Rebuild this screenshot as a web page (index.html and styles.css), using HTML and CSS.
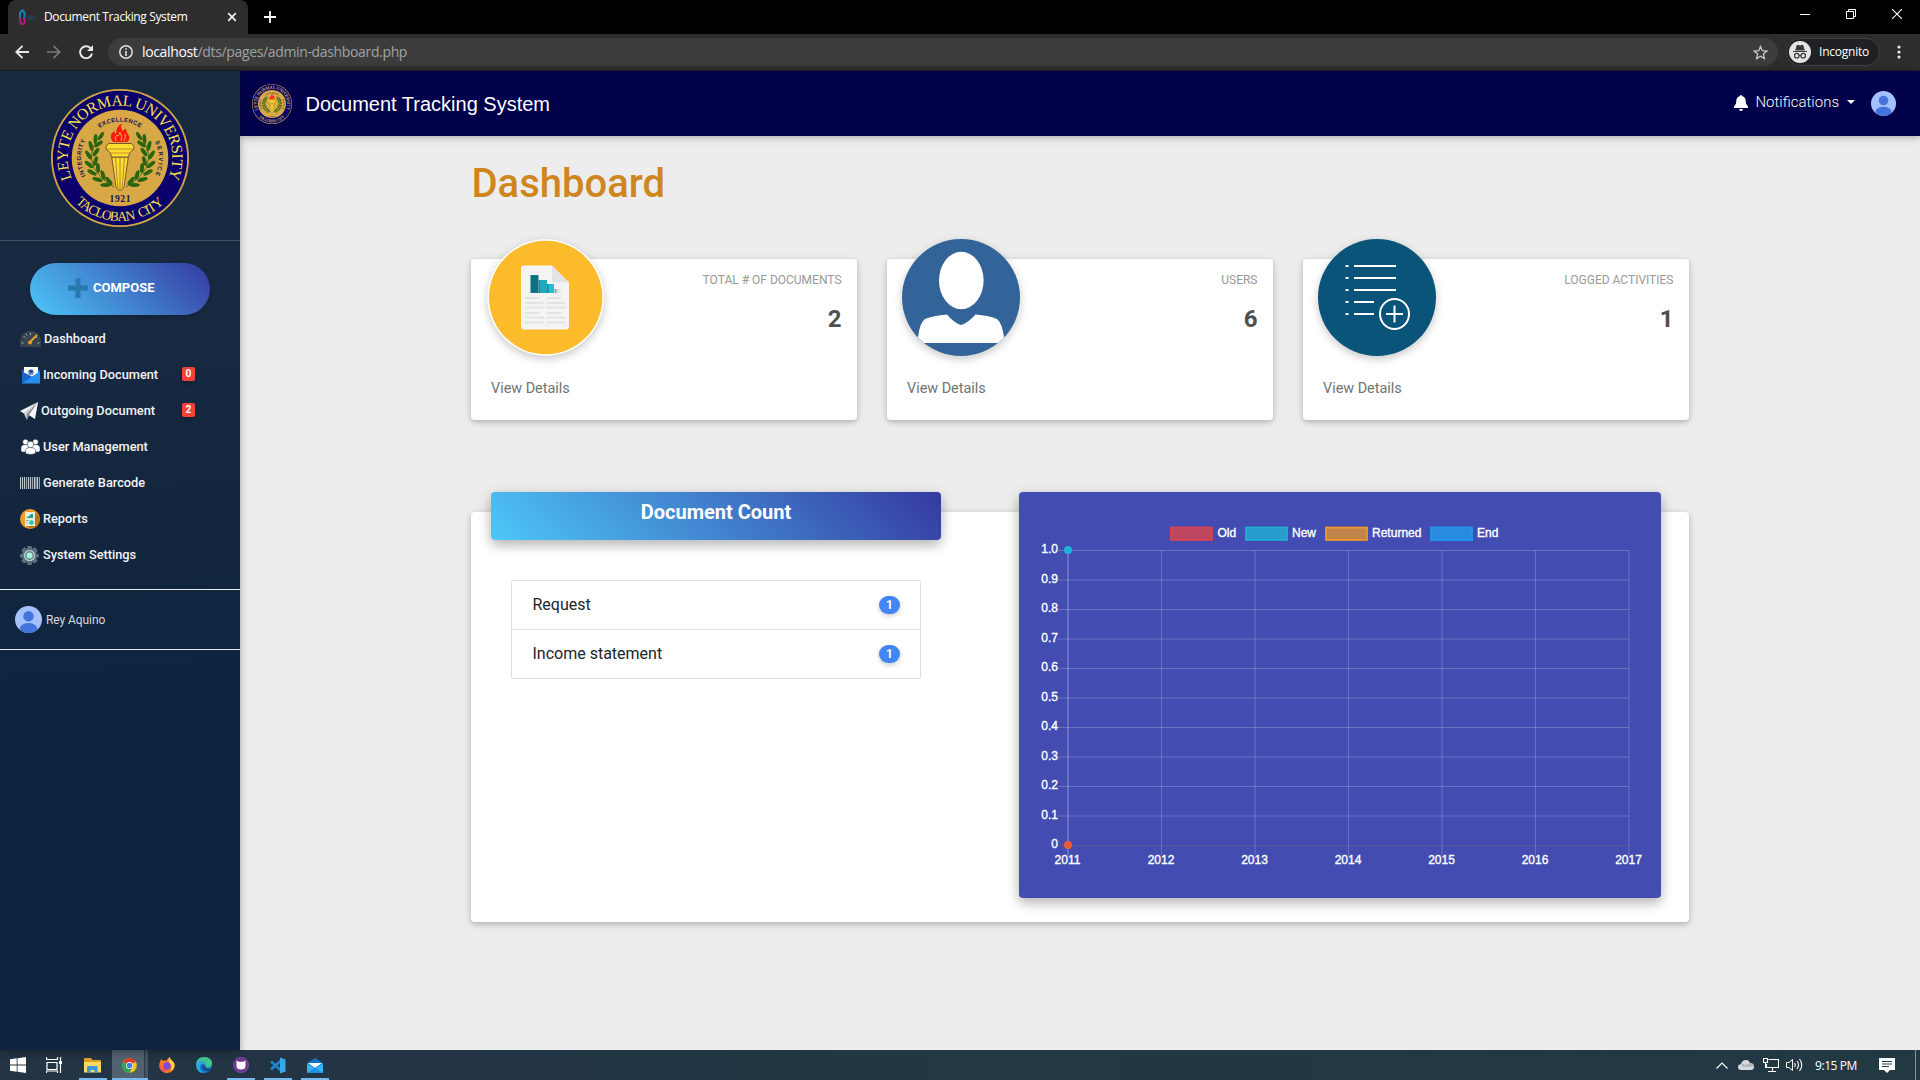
FILE: index.html
```html
<!DOCTYPE html>
<html lang="en">
<head>
<meta charset="utf-8">
<title>Document Tracking System</title>
<link rel="stylesheet" href="styles.css">
</head>
<body>
<svg class="defs" width="0" height="0">
  <defs>
    <path id="arcTop" d="M-48.2 20.5A52.4 52.4 0 1 1 48.2 20.5"/>
    <path id="arcBottom" d="M-44.5 44.5A63 63 0 0 0 44.5 44.5"/>
    <path id="arcEx" d="M-20.5 -30A36.3 36.3 0 0 1 20.5 -30"/>
    <path id="arcInt" d="M-34.5 18A39 39 0 0 1 -34.5 -18"/>
    <path id="arcSer" d="M35 -16.5A38.7 38.7 0 0 1 35 17.5"/>
    <g id="laurel" fill="#2b6410">
      <path d="M-18 -24Q-31 -10 -28 4T-6 29" fill="none" stroke="#2b6410" stroke-width=".8"/>
      <ellipse cx="-19" cy="-22" rx="1.9" ry="4.6" transform="rotate(32 -19 -22)"/>
      <ellipse cx="-24.5" cy="-19" rx="1.9" ry="5" transform="rotate(5 -24.5 -19)"/>
      <ellipse cx="-21.5" cy="-14" rx="1.9" ry="5" transform="rotate(55 -21.5 -14)"/>
      <ellipse cx="-29" cy="-12" rx="2" ry="5.2" transform="rotate(-16 -29 -12)"/>
      <ellipse cx="-24" cy="-6" rx="2" ry="5" transform="rotate(36 -24 -6)"/>
      <ellipse cx="-31.5" cy="-3" rx="2" ry="5.2" transform="rotate(-32 -31.5 -3)"/>
      <ellipse cx="-24.5" cy="3" rx="2" ry="5" transform="rotate(16 -24.5 3)"/>
      <ellipse cx="-31" cy="6.5" rx="2" ry="5.2" transform="rotate(-50 -31 6.5)"/>
      <ellipse cx="-22" cy="10" rx="2" ry="5" transform="rotate(-5 -22 10)"/>
      <ellipse cx="-28" cy="14.5" rx="2" ry="5.2" transform="rotate(-62 -28 14.5)"/>
      <ellipse cx="-17" cy="17" rx="2" ry="5" transform="rotate(-20 -17 17)"/>
      <ellipse cx="-22.5" cy="21.5" rx="2" ry="5.2" transform="rotate(-76 -22.5 21.5)"/>
      <ellipse cx="-11" cy="23" rx="2" ry="5" transform="rotate(-40 -11 23)"/>
      <ellipse cx="-14.5" cy="27" rx="1.9" ry="5.2" transform="rotate(-90 -14.5 27)"/>
    </g>
    <symbol id="seal" viewBox="-69 -69 138 138">
      <circle r="69" fill="#d3a545"/>
      <circle r="67.2" fill="#0b006b"/>
      <circle r="48.3" fill="#d8a846"/>
      <g font-family="Liberation Serif, serif" fill="#f5e04a">
        <text font-size="15.5" textLength="206"><textPath href="#arcTop" textLength="206">LEYTE NORMAL UNIVERSITY</textPath></text>
        <text font-size="13.5" word-spacing="3" textLength="98"><textPath href="#arcBottom" textLength="98">TACLOBAN CITY</textPath></text>
        <text x="0" y="44" font-size="9.5" font-weight="700" fill="#171052" text-anchor="middle" textLength="21">1921</text>
      </g>
      <g font-family="Liberation Sans, sans-serif" font-weight="700" font-size="6" fill="#171052">
        <text textLength="43"><textPath href="#arcEx" textLength="43">EXCELLENCE</textPath></text>
        <text textLength="37"><textPath href="#arcInt" textLength="37">INTEGRITY</textPath></text>
        <text textLength="34.5"><textPath href="#arcSer" textLength="34.5">SERVICE</textPath></text>
      </g>
      <use href="#laurel"/>
      <use href="#laurel" transform="scale(-1 1)"/>
      <path d="M-8.300 -1L-4 29Q0 36 4 29L8.300 -1Z" fill="#fbdc30" stroke="#7b5532" stroke-width="1"/>
      <path d="M-4.500 0L-2 31M0 0V32M4.500 0L2 31" stroke="#b98426" stroke-width="1"/>
      <path d="M-11.500 -14.500H11.500Q14.500 -12 14 -9L9.500 -5L8.500 -1H-8.500L-9.500 -5L-14 -9Q-14.500 -12 -11.500 -14.500Z" fill="#fbdc30" stroke="#7b5532" stroke-width="1"/>
      <path d="M-13.500 -9H13.500M-9.500 -5H9.500" stroke="#b98426" stroke-width=".9"/>
      <path d="M-7 -16Q-12 -22 -6 -27Q-5 -24 -4 -24Q-4 -32 2 -34.500Q0 -30 3 -27Q4 -29 6 -29.500Q6 -26 9 -22Q10 -18 7 -16Z" fill="#fb1b0c"/>
      <path d="M-4 -17Q-6 -21 -3 -23Q-2 -20 0 -26Q3 -21 1 -17M4 -17Q6 -20 5 -24" fill="none" stroke="#f8b04a" stroke-width="1"/>
    </symbol>
    <symbol id="avatar" viewBox="0 0 27 27">
      <clipPath id="avc"><circle cx="13.5" cy="13.5" r="13.5"/></clipPath>
      <g clip-path="url(#avc)"><rect width="27" height="27" fill="#a3c2fd"/><circle cx="13.5" cy="10.3" r="5.2" fill="#4573dc"/><path d="M5 27V21.500Q7 17 13.500 17T22 21.500V27Z" fill="#4573dc"/></g>
    </symbol>
  </defs>
</svg>

<header class="chrome">
  <div class="tabstrip">
    <div class="tab">
      <svg width="7" height="17" viewBox="0 0 7 17"><path d="M3 1Q0 4 1 9M3 1Q7 3 5 10" fill="none" stroke="#1683b5" stroke-width="2"/><path d="M1 9Q1 16 4 15T5 9" fill="none" stroke="#b31c78" stroke-width="2"/></svg>
      <span class="fav-text">dts</span>
      <span class="tab-title">Document Tracking System</span>
      <svg width="10" height="10" viewBox="0 0 10 10"><path d="M1.200 1.200l7.600 7.600M8.800 1.200l-7.600 7.600" stroke="#f1f1f1" stroke-width="1.7"/></svg>
    </div>
    <svg class="plus" width="12" height="12" viewBox="0 0 12 12"><path d="M6 0v12M0 6h12" stroke="#fff" stroke-width="1.8"/></svg>
    <div class="winbtns">
      <svg width="10" height="10" viewBox="0 0 10 10"><path d="M0 5.500h10" stroke="#fff"/></svg>
      <svg width="10" height="10" viewBox="0 0 10 10"><path d="M.5 2.500h7v7h-7zM2.500 2.500v-2h7v7h-2" fill="none" stroke="#fff"/></svg>
      <svg width="10" height="10" viewBox="0 0 10 10"><path d="M0 0l10 10M10 0L0 10" stroke="#fff" stroke-width="1.1"/></svg>
    </div>
  </div>
  <div class="toolbar">
    <svg width="14" height="14" viewBox="0 0 14 14"><path d="M14 7H1.500M7.500 .8L1.300 7l6.200 6.200" fill="none" stroke="#e8e8e8" stroke-width="1.9"/></svg>
    <svg width="14" height="14" viewBox="0 0 14 14"><path d="M0 7h12.500M6.500 .8L12.700 7l-6.200 6.200" fill="none" stroke="#7b7b7b" stroke-width="1.7"/></svg>
    <svg class="reload" width="14" height="14" viewBox="0 0 14 14"><path d="M12 3.700A6 6 0 1 0 13 8.500" fill="none" stroke="#e8e8e8" stroke-width="1.9"/><path d="M14 0v6H8z" fill="#e8e8e8"/></svg>
    <div class="address">
      <svg width="14" height="14" viewBox="0 0 14 14"><circle cx="7" cy="7" r="6.2" fill="none" stroke="#e0e0e0" stroke-width="1.5"/><path d="M7 3.200v1.600M7 6v5" stroke="#e0e0e0" stroke-width="1.6"/></svg>
      <span class="url"><b>localhost</b>/dts/pages/admin-dashboard.php</span>
      <svg class="star" width="15" height="15" viewBox="0 0 15 15"><path d="M7.500 1.500l1.800 4.200 4.600.4-3.500 3 1 4.500-3.900-2.400-3.900 2.400 1-4.500-3.500-3 4.600-.4z" fill="none" stroke="#c9c9c9" stroke-width="1.3"/></svg>
    </div>
    <div class="incog">
      <svg width="22" height="22" viewBox="0 0 22 22"><circle cx="11" cy="11" r="11" fill="#e4e4e4"/><path d="M4 10.500h14M7 9l1.300-4.500 2.700.6 2.700-.6L15 9z" fill="#3a3a3a" stroke="#3a3a3a" stroke-width="1.2"/><g fill="none" stroke="#3a3a3a" stroke-width="1.2"><circle cx="7.8" cy="14.7" r="2.3"/><circle cx="14.2" cy="14.7" r="2.3"/><path d="M10 14.500h2"/></g></svg>
      <span>Incognito</span>
    </div>
    <svg class="kebab" width="4" height="14" viewBox="0 0 4 14"><g fill="#e8e8e8"><circle cx="2" cy="2" r="1.6"/><circle cx="2" cy="7" r="1.6"/><circle cx="2" cy="12" r="1.6"/></g></svg>
  </div>
</header>

<div class="app">
  <aside class="sidebar">
    <div class="brand"><svg width="138" height="138"><use href="#seal"/></svg></div>
    <button class="compose"><svg width="20" height="20" viewBox="0 0 20 20"><path d="M7.500 0h5v7.500H20v5h-7.500V20h-5v-7.500H0v-5h7.500z" fill="#2779ae"/></svg><span>COMPOSE</span></button>
    <nav class="menu">
      <a><svg width="21" height="16" viewBox="0 0 21 16"><path d="M0 16V9Q2 0 10.500 0T21 9v7z" fill="#37444f"/><path d="M1.500 12h2M17.500 12h2M3.500 5l1.500 1.500M10.500 2v2M17 6l-1 1M6 3l1 1.500" stroke="#b6c1c5" stroke-width=".9"/><path d="M9 12L17 4" stroke="#e8a720" stroke-width="1.8"/><circle cx="10" cy="11.5" r="2" fill="#ef9a1c"/></svg><span class="wide">Dashboard</span></a>
      <a><svg class="mail" width="20" height="17" viewBox="0 0 20 17"><path d="M1 4l3-3h12l3 3v12H1z" fill="#1767cf"/><path d="M3 0h14v10H3z" fill="#fff"/><circle cx="10" cy="5.2" r="2.6" fill="#2547a5"/><path d="M7.500 4.700l2.500 2.500L13 4.700" fill="none" stroke="#fff" stroke-width=".6"/><path d="M1 4.500l9 5.500 9-5.500v12H1z" fill="#288df0"/><path d="M1 4.500v12L11 9.500z" fill="#1767cf"/></svg><span>Incoming Document</span><i class="badge">0</i></a>
      <a><svg width="18" height="19" viewBox="0 0 18 19"><path d="M18 0L0 9l4 2.500z" fill="#f5f5f5"/><path d="M18 0L4 11.500l2.500 6L9 13l5.500 3.500z" fill="#dedede"/><path d="M18 0L6.500 12v6.500L9 14z" fill="#8a8f96"/><path d="M18 0L9 13l6 4z" fill="#f7f7f7"/></svg><span class="tight">Outgoing Document</span><i class="badge">2</i></a>
      <a><svg class="mail" width="19" height="16" viewBox="0 0 19 16"><g fill="#fff" stroke="#162940" stroke-width=".5"><circle cx="4.500" cy="3" r="2.8"/><circle cx="14.5" cy="3" r="2.8"/><path d="M0 12V9q0-3.500 4.500-3.500T9 9v4H1zM10 13V9q0-3.500 4.500-3.500T19 9v3l-1 1z"/><circle cx="9.5" cy="5.5" r="3.2"/><path d="M4.500 14.500V12q0-3.500 5-3.500t5 3.500v2.500q-5 2-10 0z"/></g></svg><span>User Management</span></a>
      <a><svg width="20" height="13" viewBox="0 0 20 13"><path d="M.5 0v12M2.500 0v12M4.500 0v12M8.500 0v12M10.500 0v12M14.500 0v12M17.500 0v12" stroke="#c3c9d0" stroke-width="1.1"/><path d="M6.500 0v12M12.500 0v12M19.500 0v12M16 0v12" stroke="#98a2ae" stroke-width="1.2"/></svg><span>Generate Barcode</span></a>
      <a><svg width="20" height="20" viewBox="0 0 20 20"><circle cx="10" cy="10" r="10" fill="#f19b26"/><path d="M15 3l4 4a10 10 0 0 1-8 13l-6-4z" fill="#b87616"/><rect x="5" y="3" width="10" height="14" fill="#e9ecd9"/><path d="M6 9l3-2 2-2 2 0v4z" fill="#279e8e"/><circle cx="11.5" cy="13.5" r="2.3" fill="#2bc0a5"/><path d="M6 11.500h3M6 14h2" stroke="#8fb6af"/></svg><span>Reports</span></a>
      <a><svg width="19" height="19" viewBox="0 0 19 19"><path d="M7.500 0h4l.6 3 2.600-2 3 3.500-1.700 2.800 2.800 1v3l-2.800.9L17.500 15l-3 2.500-2.400-1.500-.6 3h-4l-.6-3L4.300 17.500l-3-2.500L3 12.200 0 11.300v-3l3-1-1.700-2.800 3-3.500 2.600 2z" fill="#5a717b"/><circle cx="9.5" cy="9.5" r="5.5" fill="#c9d6d9"/><circle cx="9.5" cy="9.5" r="4.4" fill="#5f7f86"/><circle cx="9.5" cy="9.5" r="3" fill="#a9f6e7"/></svg><span>System Settings</span></a>
    </nav>
    <div class="me"><svg width="27" height="27"><use href="#avatar"/></svg><span>Rey Aquino</span></div>
  </aside>

  <main class="main">
    <div class="topbar">
      <svg width="40" height="40"><use href="#seal"/></svg>
      <span class="site">Document Tracking System</span>
      <svg class="bell" width="14" height="16" viewBox="0 0 14 16"><path d="M7 0q1 0 1 1 3.700.9 3.700 5 0 4 2.300 5.500v1.500H0v-1.500Q2.300 10 2.300 6 2.300 1.900 6 1q0-1 1-1zM5 14h4q-.3 2-2 2T5 14z" fill="#fff"/></svg>
      <span class="notif">Notifications</span>
      <i class="caret"></i>
      <svg width="25" height="25"><use href="#avatar"/></svg>
    </div>
    <div class="content">
      <h1>Dashboard</h1>
      <section class="cards">
        <article class="card">
          <svg class="orb" width="118" height="118" viewBox="0 0 118 118"><circle cx="59.7" cy="58.5" r="58.3" fill="#fff"/><circle cx="59.7" cy="58.5" r="56.7" fill="#fcbb2b"/><path d="M38 26.500h28l17 17v44q0 3-3 3H38q-3 0-3-3V29.500q0-3 3-3z" fill="#f4f4f4"/><path d="M66 26.500l17 17H66z" fill="#e2e3e3"/><path d="M44.500 36h8v18h-8z" fill="#0d7380"/><path d="M53 41h8v13h-8z" fill="#1fa9bc"/><path d="M61.500 45h6.500v9h-6.500z" fill="#24bdd2"/><path d="M52.500 41h1.500v13H52.500zM61 45h1.500v9H61z" fill="#2e7f9a"/><path d="M68.500 50h6v4h-6z" fill="#dfe1e1"/><path d="M68.500 50h2v4h-2z" fill="#76aeb2"/><path d="M39 59h14.500M60.500 59h14.500M39 63.800h19M60.500 63.800h19M39 68.500h19M60.500 68.500h19M39 74h14.500M60.500 74h14.500M39 78.500h19M60.500 78.500h19M39 83.500h19M60.500 83.500h19" stroke="#e2e3e3" stroke-width="2.2"/></svg>
          <div class="stat"><p>TOTAL # OF DOCUMENTS</p><h3>2</h3></div>
          <a class="details">View Details</a>
        </article>
        <article class="card">
          <svg class="orb" width="118" height="118" viewBox="0 0 118 118"><clipPath id="oc"><ellipse cx="59" cy="58.5" rx="59" ry="58.5"/></clipPath><g clip-path="url(#oc)"><rect width="118" height="118" fill="#336499"/><ellipse cx="59.3" cy="41.5" rx="22.3" ry="28.7" fill="#fff"/><path d="M16 104V98Q18 83 23 80Q31 76.500 45 75.500Q52 84 59 86Q66 84 73.500 75.500Q88 76.500 95 80Q100 84 102 98V104Z" fill="#fff"/></g></svg>
          <div class="stat"><p>USERS</p><h3>6</h3></div>
          <a class="details">View Details</a>
        </article>
        <article class="card">
          <svg class="orb" width="118" height="118" viewBox="0 0 118 118"><ellipse cx="59" cy="58.5" rx="59" ry="58.5" fill="#0a547a"/><path d="M36 27h42M36 39h42M36 51h42M36 63h20M36 75h20M27.500 27h3M27.500 39h3M27.500 51h3M27.500 63h3M27.500 75h3M68 75h17M76.500 66.500v17" stroke="#fff" stroke-width="2"/><ellipse cx="76.5" cy="75" rx="14.5" ry="15" fill="none" stroke="#fff" stroke-width="2"/></svg>
          <div class="stat"><p>LOGGED ACTIVITIES</p><h3>1</h3></div>
          <a class="details">View Details</a>
        </article>
      </section>
      <section class="panel">
        <div class="counts">
          <h2>Document Count</h2>
          <ul>
            <li><span>Request</span><b>1</b></li>
            <li><span>Income statement</span><b>1</b></li>
          </ul>
        </div>
        <svg class="chart" id="chart" width="642" height="406" viewBox="0 0 642 406"></svg>
      </section>
    </div>
  </main>
</div>

<footer class="taskbar">
  <div class="task start"><svg width="16" height="16" viewBox="0 0 16 16"><path d="M0 2.300L6.700 1.300V7.600H0zM7.500 1.200L16 0V7.600H7.500zM0 8.400H6.700V14.700L0 13.700zM7.500 8.400H16V16L7.500 14.800z" fill="#fff"/></svg></div>
  <div class="task view"><svg width="16" height="16" viewBox="0 0 16 16"><path d="M1 5.500h10v7H1zM.5 0v2.500h11V0M.5 16v-2h11v2M14.500 0v16" fill="none" stroke="#fff" stroke-width="1.2"/><rect x="13" y="4" width="3" height="3" fill="#fff"/></svg></div>
  <div class="task open"><svg width="17" height="15" viewBox="0 0 17 15"><path d="M0 1q0-1 1-1h6l1.500 2H16q1 0 1 1v11H0z" fill="#e0a223"/><path d="M0 4h17v10.500H0z" fill="#fbd763"/><path d="M3 14.500V9q0-1 1-1h8.500q1 0 1 1v5.500h-3V12h-4v2.500z" fill="#3b97dc"/></svg></div>
  <div class="task active"><svg width="15" height="15" viewBox="-7.5 -7.5 15 15"><circle r="7.3" fill="#fbc417"/><path d="M0 0L-6.400 -3.700A7.400 7.400 0 0 1 6.400 -3.700Z" fill="#e33b2e"/><path d="M0 0L-6.400 -3.700A7.400 7.400 0 0 0 0 7.400L3 1.500Z" fill="#2ea44e"/><circle r="3.5" fill="#fff"/><circle r="2.8" fill="#3f7fe8"/></svg></div>
  <div class="task"><svg width="16" height="16" viewBox="0 0 16 16"><path d="M8 16A7.600 7.600 0 0 1 1 5L2 2l2 2 1-1 2 1Q8 2 10.500 0 11 2 13 3.500 16 6 15.700 9A7.600 7.600 0 0 1 8 16z" fill="#fb7a2a"/><path d="M10.500 0Q11 2 13 3.500 16 6 15.700 9q-1 4-4 5.500Q14 8 10 5.500 9 2 10.500 0z" fill="#ffd83c"/><circle cx="8" cy="9" r="3.7" fill="#8247d8"/><path d="M1 6q0 7 7 7-2 2-4 1.200Q.5 11 1 6z" fill="#f23a60"/></svg></div>
  <div class="task"><svg width="16" height="16" viewBox="0 0 16 16"><circle cx="8" cy="8" r="8" fill="#1877c9"/><path d="M0 7Q1 0 8 0q8 0 8 6.500 0 4-4.500 4-2.500 0-2-1.500 1.500-3-2.500-4.500Q3 4 0 7z" fill="#41c88e"/><path d="M0 7Q3 3 7 4.500 10 6 9.500 8.500 6 5 4 9q-1 4 4 7Q0 16 0 7z" fill="#2ba7dd"/><path d="M9.500 9Q8 12 15 11.500L13.500 14Q6 15 6 9.500 7 7 9.500 9z" fill="#164d91"/></svg></div>
  <div class="task open"><svg width="16" height="16" viewBox="0 0 16 16"><circle cx="8" cy="8" r="7.7" fill="#6f3592" stroke="#8d5bab" stroke-width=".6"/><path d="M3.500 3.500l2.500 1.300h4l2.500-1.300v4.500q.5 4.500-4.500 4.500T3.500 8z" fill="#fff"/></svg></div>
  <div class="task open"><svg width="17" height="17" viewBox="0 0 17 17"><path d="M12 3.500L2 12.500M2 4.500L12 13.500" stroke="#1c86cf" stroke-width="2.6"/><path d="M11 .5L16.500 2.500v12L11 16.500z" fill="#35a9ee"/></svg></div>
  <div class="task open"><svg width="16" height="15" viewBox="0 0 16 15"><path d="M0 5l8-5 8 5v10H0z" fill="#1372c4"/><path d="M1 5h14l-7 5z" fill="#fff"/><path d="M0 5.500l8 5 8-5V15H0z" fill="#36b4f2"/><path d="M0 15l8-5.500 8 5.500z" fill="#1d93e0"/></svg></div>
  <div class="tray">
    <svg width="12" height="7" viewBox="0 0 12 7"><path d="M.5 6.500L6 1l5.500 5.500" fill="none" stroke="#fff" stroke-width="1.2"/></svg>
    <svg width="16" height="10" viewBox="0 0 16 10"><path d="M3 10q-3 0-3-3 0-2.500 3-3Q4 0 8 0q3 0 4 3 4 0 4 3.500T13 10z" fill="#d6d9db"/><path d="M3 4q2-1 4 1l5-2q4 0 4 3.500L5 7z" fill="#a2abb0" opacity=".7"/></svg>
    <svg width="16" height="14" viewBox="0 0 16 14"><path d="M5.500 1.500h10v8H3.500V6M9.500 10v3M5 13.500h8M.5.500h4v4h-4zM2.500 4.500v5h2" fill="none" stroke="#fff" stroke-width="1.1"/></svg>
    <svg width="17" height="14" viewBox="0 0 17 14"><path d="M.5 4.500H3l3.500-3v11L3 9.500H.5z" fill="none" stroke="#fff"/><path d="M8.500 5q1.500 2 0 4M11 3q3 4 0 8M13.500 1q4.500 6 0 12" fill="none" stroke="#fff" stroke-width="1.1"/></svg>
    <span class="clock">9:15 PM</span>
    <svg width="16" height="15" viewBox="0 0 16 15"><path d="M0 0h16v12h-5l-3 3-3-3H0z" fill="#fff"/><path d="M3 3.500h10M3 6h10M3 8.500h7" stroke="#233a44"/></svg>
    <i class="peek"></i>
  </div>
</footer>
<script src="chart.js"></script>
</body>
</html>
```
FILE: chart.js
```js
(function () {
  var svg = document.getElementById('chart');
  var x0 = 49, y0 = 58.5, dx = 93.5, dy = 29.5;
  var out = '';
  [['Old', 151, 198.5, 18.7, '#d94350', '#bd4660'],
   ['New', 226, 273, 24, '#1fadd2', '#279bcb'],
   ['Returned', 306, 353, 49.5, '#f0962f', '#c08449'],
   ['End', 411, 458, 21.5, '#2199f0', '#298be0']].forEach(function (s) {
    out += '<rect x="' + (s[1] + 1) + '" y="35.5" width="41" height="12.5" fill="' + s[5] + '" stroke="' + s[4] + '" stroke-width="1.8"/>';
    out += '<text x="' + s[2] + '" y="45" textLength="' + s[3] + '">' + s[0] + '</text>';
  });
  for (var i = 0; i <= 10; i++) {
    var y = y0 + i * dy;
    out += '<path class="' + (i === 10 ? 'axis' : 'grid') + '" d="M' + (x0 - 10) + ' ' + y + 'H' + (x0 + 561.5) + '"/>';
    out += '<text x="' + (x0 - 10) + '" y="' + (y + 2.5) + '" text-anchor="end">' + (i === 10 ? '0' : (1 - i / 10).toFixed(1)) + '</text>';
  }
  for (var k = 0; k <= 6; k++) {
    var x = x0 + k * dx;
    out += '<path class="' + (k ? 'grid' : 'grid first') + '" d="M' + x + ' ' + y0 + 'V' + (y0 + 305) + '"/>';
    out += '<text x="' + (x - .5) + '" y="372" text-anchor="middle">' + (2011 + k) + '</text>';
  }
  out += '<circle cx="49" cy="58" r="4" fill="#1cb5dc"/><circle cx="49" cy="353" r="4" fill="#ef5a33"/>';
  svg.innerHTML = out;
})();
```
FILE: styles.css
```css
* { box-sizing: border-box; }
body { margin: 0; width: 1920px; height: 1080px; overflow: hidden; display: flex; flex-direction: column; font-family: Roboto, sans-serif; }
.defs { position: absolute; }
svg { flex: none; display: block; }
i { font-style: normal; }

.chrome { height: 71px; background: #2d2d2d; border-bottom: 1px solid #1d1d1d; font-family: "Open Sans", sans-serif; }
.tabstrip { height: 34px; background: #000; display: flex; align-items: center; padding-left: 8px; }
.tab { width: 240px; height: 34px; background: #2d2d2d; border-radius: 8px 8px 0 0; display: flex; align-items: center; padding: 0 11px; }
.fav-text { width: 10px; margin-left: 1px; font-size: 7px; letter-spacing: -.8px; color: #1d4b78; }
.tab-title { margin-left: 7px; padding-bottom: 1px; flex: 1; color: #fff; font-size: 12px; letter-spacing: -.37px; white-space: nowrap; }
.plus { margin-left: 16px; }
.winbtns { margin-left: auto; margin-right: 18px; margin-bottom: 6px; display: flex; gap: 36px; }
.toolbar { height: 36px; display: flex; align-items: center; padding-left: 15px; }
.toolbar > svg { margin-right: 18px; }
.toolbar > .reload { margin-right: 15px; }
.address { width: 1670px; height: 28px; border-radius: 14px; background: #3c3c3c; display: flex; align-items: center; padding: 0 10px 0 11px; }
.url { margin-left: 9px; padding-bottom: 0; font-size: 14px; letter-spacing: -.35px; line-height: 18px; color: #9fa2a5; white-space: nowrap; }
.url b { font-weight: 400; color: #fff; }
.star { margin-left: auto; }
.incog { margin-left: 8px; width: 94px; height: 28px; border: 1px solid #404144; border-radius: 14px; background: #202124; display: flex; align-items: center; padding-left: 2px; color: #fff; font-size: 12px; letter-spacing: -.22px; }
.incog span { margin-left: 8px; padding-bottom: 1px; }
.toolbar > .kebab { margin: 0 0 0 17px; }

.app { height: 979px; display: flex; }
.sidebar { width: 240px; background: linear-gradient(175deg, #16293f 0%, #172a41 25%, #13263d 45%, #0e2440 62%, #0f2440 100%); box-shadow: 0 2px 5px rgba(0,0,0,.16), 0 2px 10px rgba(0,0,0,.18); position: relative; z-index: 1; }
.brand { height: 170px; border-bottom: 1px solid #455263; padding: 18px 51px; }
.compose { display: flex; align-items: center; width: 180px; height: 52px; margin: 22px 30px 0; padding: 0 0 3px 38px; border: 0; border-radius: 26px; background: linear-gradient(45deg, #4cc7f9, #3539a0); box-shadow: 0 2px 5px rgba(0,0,0,.2); color: #fff; font: 700 13px Roboto, sans-serif; }
.compose span { margin-left: 5px; }
.menu { padding: 6px 0 16px; }
.menu a { height: 36px; display: grid; grid-template-columns: 23px 139px 13px; align-items: center; padding-left: 20px; color: #f2f3f5; font-size: 12.8px; font-weight: 500; white-space: nowrap; }
.menu .mail { margin-left: .5px; }
.menu span { padding-bottom: 2px; letter-spacing: -.02px; }
.menu .wide { padding-left: 1px; }
.menu .tight { margin-left: -2px; }
.badge { width: 13px; height: 14px; border-radius: 2px; background: #f44336; color: #fff; font-size: 10.2px; font-weight: 700; line-height: 14px; text-align: center; box-shadow: 0 2px 4px rgba(0,0,0,.25); margin-bottom: 2px; }
.me { height: 61px; border: solid #e9ebee; border-width: 1px 0; display: flex; align-items: center; padding: 0 15px; gap: 4px; color: #d5d9de; font-size: 12px; letter-spacing: -.08px; }

.main { width: 1680px; background: #ededed; }
.topbar { height: 65px; background: #00004b; display: flex; align-items: center; padding: 0 24px 0 12px; color: #fff; box-shadow: 0 2px 5px rgba(0,0,0,.16), 0 2px 10px rgba(0,0,0,.12); }
.site { margin-left: 13.5px; padding-top: 2px; font: 20px "Liberation Sans", sans-serif; white-space: nowrap; }
.bell { margin-left: auto; margin-bottom: 2px; }
.notif { margin-left: 7px; padding-bottom: 3px; font-size: 15px; font-weight: 300; }
.caret { margin: 0 16px 4px 8px; border: 4.5px solid transparent; border-top-color: #fff; border-bottom: 0; }
.content { width: 1218px; margin-left: 231px; }
h1 { margin: 24px 0 0 .5px; height: 48px; line-height: 48px; font-size: 40px; font-weight: 500; color: #d0861e; }
.cards { margin-top: 51px; display: flex; gap: 30px; }
.card { width: 386px; height: 161px; background: #fff; border-radius: 4px; box-shadow: 0 2px 5px rgba(0,0,0,.16), 0 2px 10px rgba(0,0,0,.12); display: grid; grid-template-columns: 118px 1fr; grid-template-rows: 98px 1fr; padding: 0 15px; }
.orb { margin-top: -20px; filter: drop-shadow(0 3px 4px rgba(0,0,0,.22)); }
.stat { text-align: right; padding-right: .5px; }
.stat p { margin: 13px 0 0; font-size: 12px; line-height: 16px; color: #999; }
.stat h3 { margin: 17px 0 0; font-size: 24px; line-height: 28px; font-weight: 700; color: #4f4f4f; }
.details { grid-column: 1 / 3; padding: 22px 0 0 5px; font-size: 14.4px; line-height: 20px; color: #747373; }
.panel { margin-top: 92px; height: 410px; background: #fff; border-radius: 4px; box-shadow: 0 2px 5px rgba(0,0,0,.16), 0 2px 10px rgba(0,0,0,.12); display: flex; padding: 0 28px 0 20px; justify-content: space-between; }
.counts { width: 450px; margin-top: -20px; }
.counts h2 { margin: 0; height: 48px; border-radius: 4px; background: linear-gradient(45deg, #4cc7f9, #3539a0); box-shadow: 0 5px 11px rgba(0,0,0,.18), 0 4px 15px rgba(0,0,0,.15); color: #fff; text-align: center; font-size: 20px; font-weight: 700; line-height: 40px; }
.counts ul { list-style: none; margin: 40px 20px 0; padding: 0; border: 1px solid #dfdfdf; border-radius: 2px; }
.counts li { height: 48px; display: flex; justify-content: space-between; align-items: center; padding: 0 20px; font-size: 16px; color: #212529; }
.counts li + li { height: 49px; border-top: 1px solid #dfdfdf; }
.counts li span { padding: 0 0 1px .5px; }
.counts b { width: 21px; height: 18px; border-radius: 9px; background: #4285f4; color: #fff; font-size: 12px; line-height: 18px; text-align: center; box-shadow: 0 2px 5px rgba(0,0,0,.2); }
.chart { margin-top: -20px; background: #434db1; border-radius: 4px; box-shadow: 0 5px 11px rgba(0,0,0,.18), 0 4px 15px rgba(0,0,0,.15); }
.chart text { font: 12px "Liberation Sans", sans-serif; fill: #fff; stroke: #fff; stroke-width: .35px; }
.grid { stroke: rgba(255,255,255,.2); stroke-width: 1; }
.first { stroke: rgba(255,255,255,.4); }
.axis { stroke: rgba(110,110,110,.45); }

.taskbar { height: 30px; background: linear-gradient(90deg, #233444, #223944); display: flex; font-family: "Open Sans", sans-serif; }
.task { width: 37px; display: flex; align-items: center; justify-content: center; }
.start { width: 36px; }
.view { width: 35px; margin-right: 3px; }
.open { background: linear-gradient(#76b9ed, #76b9ed) 5px 28px / 28px 2px no-repeat; }
.active { background: linear-gradient(#76b9ed, #76b9ed) 1px 28px / 36px 2px no-repeat, linear-gradient(90deg, transparent 1px, #526270 1px, #526270 33px, #2b3a47 33px, #2b3a47 34px, #45545f 34px); }
.tray { margin-left: auto; display: flex; align-items: center; }
.tray svg { margin-right: 9px; }
.tray svg:first-child { margin-right: 10px; }
.tray svg:nth-child(3) { margin-right: 7px; }
.tray svg:nth-child(4) { margin-right: 12px; }
.tray svg:nth-child(6) { margin: 0 20px 0 22px; }
.clock { color: #fff; font-size: 12px; letter-spacing: -.4px; }
.peek { width: 1px; height: 30px; background: #82909a; margin-right: 4px; }
```
